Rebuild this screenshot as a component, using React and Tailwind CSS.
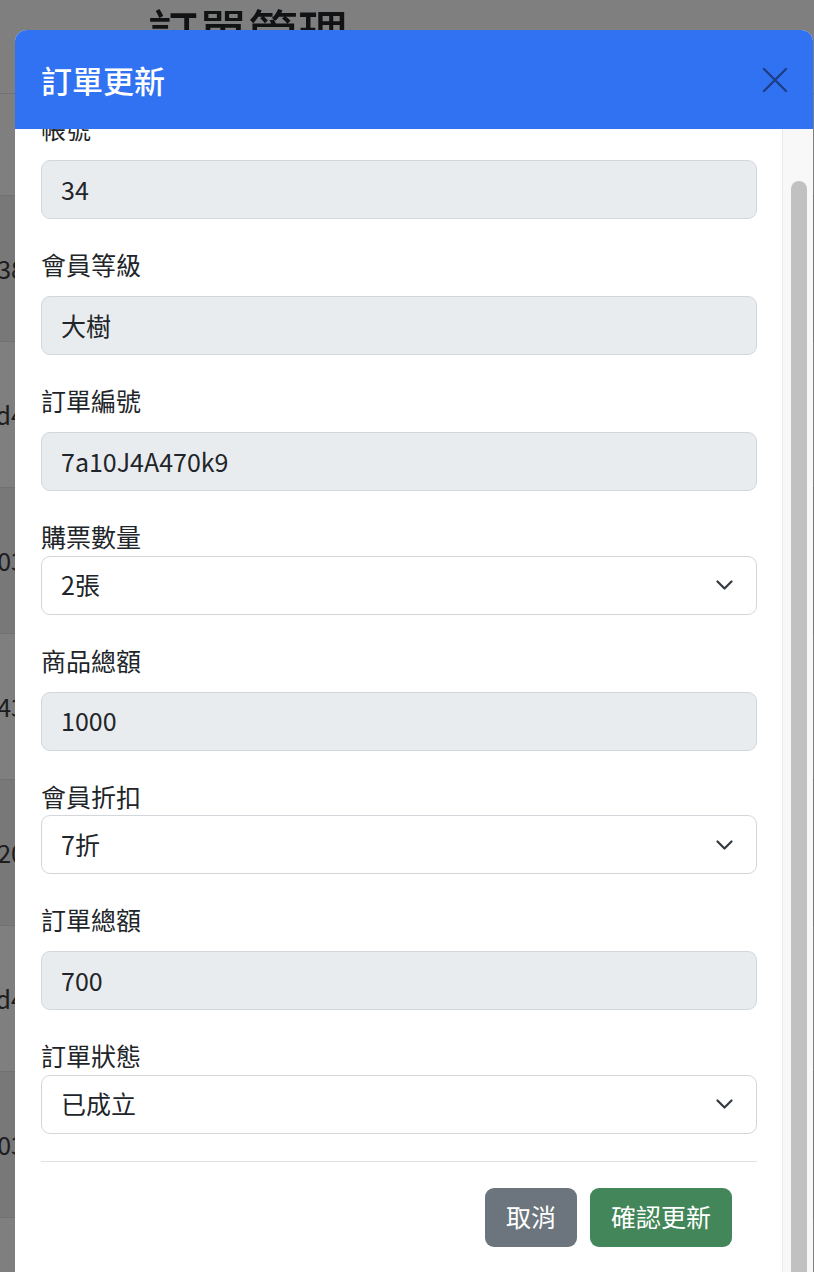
import { useLayoutEffect, useRef } from 'react';

const fields = [
  { label: '帳號', value: '34' },
  { label: '會員等級', value: '大樹' },
  { label: '訂單編號', value: '7a10J4A470k9' },
  { label: '購票數量', value: '2張', select: true },
  { label: '商品總額', value: '1000' },
  { label: '會員折扣', value: '7折', select: true },
  { label: '訂單總額', value: '700' },
  { label: '訂單狀態', value: '已成立', select: true },
];

// right ends of the table cells peeking out behind the modal
const rows = ['38', 'd4', '03', '43', '20', 'd4', '03', '43'];

function Chevron() {
  return (
    <svg width="17" height="10" viewBox="0 0 17 10" fill="none">
      <path d="M1.5 1.5 L8.5 8.5 L15.5 1.5" stroke="#343a40" strokeWidth="2.2" strokeLinecap="round" strokeLinejoin="round" />
    </svg>
  );
}

function Field({ label, value, select }) {
  return (
    <div className="mb-[27px]">
      <label className={`block text-[25px] leading-[37.5px] text-[#212529] ${select ? '' : 'mb-[12.5px]'}`}>
        {label}
      </label>
      {select ? (
        <div className="flex h-[59px] items-center justify-between rounded-[9px] border border-[#d3d7dc] bg-white pl-[19px] pr-[23px] text-[25px] text-[#212529]">
          <span>{value}</span>
          <Chevron />
        </div>
      ) : (
        <div className="flex h-[59px] items-center rounded-[9px] border border-[#d3d7dc] bg-[#e9ecef] px-[19px] text-[25px] text-[#212529]">
          {value}
        </div>
      )}
    </div>
  );
}

export default function App() {
  const bodyRef = useRef(null);

  useLayoutEffect(() => {
    if (bodyRef.current) bodyRef.current.scrollTop = 55;
  }, []);

  return (
    <div className="relative h-[1272px] w-[814px] overflow-hidden bg-white font-['Noto_Sans_CJK_TC','Noto_Sans',sans-serif]">
      {/* page behind the modal */}
      <div>
        <h1 className="pl-[148px] text-[50px] font-medium leading-[60px] text-[#212529]">訂單管理</h1>
        <div className="mt-[33px] h-[102px] border-t border-[#dee2e6]" />
        {rows.map((r, i) => (
          <div
            key={i}
            className={`flex h-[146px] items-center border-t border-[#dee2e6] ${i % 2 === 0 ? 'bg-[#f0f0f0]' : 'bg-white'}`}
          >
            <div className="flex w-[15px] justify-end overflow-hidden">
              <span className="-mr-[10px] text-[25px] text-[#3a3a3a]">{r}</span>
            </div>
          </div>
        ))}
      </div>

      <div className="absolute inset-0 bg-black/50" />

      {/* modal */}
      <div className="absolute left-[15px] top-[30px] w-[798px] overflow-hidden rounded-t-[12px] bg-white">
        <div className="flex h-[99px] items-center justify-between bg-[#3172f2] pl-[26px] pr-[25px]">
          <h5 className="text-[31px] font-medium leading-none text-white">訂單更新</h5>
          <svg width="26" height="26" viewBox="0 0 26 26" fill="none">
            <path d="M2 2 L24 24 M24 2 L2 24" stroke="#1d3f86" strokeWidth="2.4" strokeLinecap="round" />
          </svg>
        </div>

        <div className="flex h-[1250px]">
          <div ref={bodyRef} className="flex-1 overflow-hidden">
            <div className="pl-[26px] pr-[25px] pt-[36px] pb-[140px]">
              {fields.map(f => (
                <Field key={f.label} {...f} />
              ))}
              <div className="border-t border-[#dee2e6] pt-[26px]">
                <div className="flex justify-end gap-[13px] pr-[25px]">
                  <button className="h-[59px] rounded-[9px] bg-[#6c757d] px-[21px] text-[25px] text-white">取消</button>
                  <button className="h-[59px] rounded-[9px] bg-[#438659] px-[21px] text-[25px] text-white">確認更新</button>
                </div>
              </div>
            </div>
          </div>
          {/* scrollbar */}
          <div className="w-[31px] shrink-0 border-l border-[#e8e8e8] bg-[#f8f8f8] pl-[8px] pr-[6px] pt-[52px]">
            <div className="h-[1190px] rounded-[8px] bg-[#c1c1c1]" />
          </div>
        </div>
      </div>
    </div>
  );
}
